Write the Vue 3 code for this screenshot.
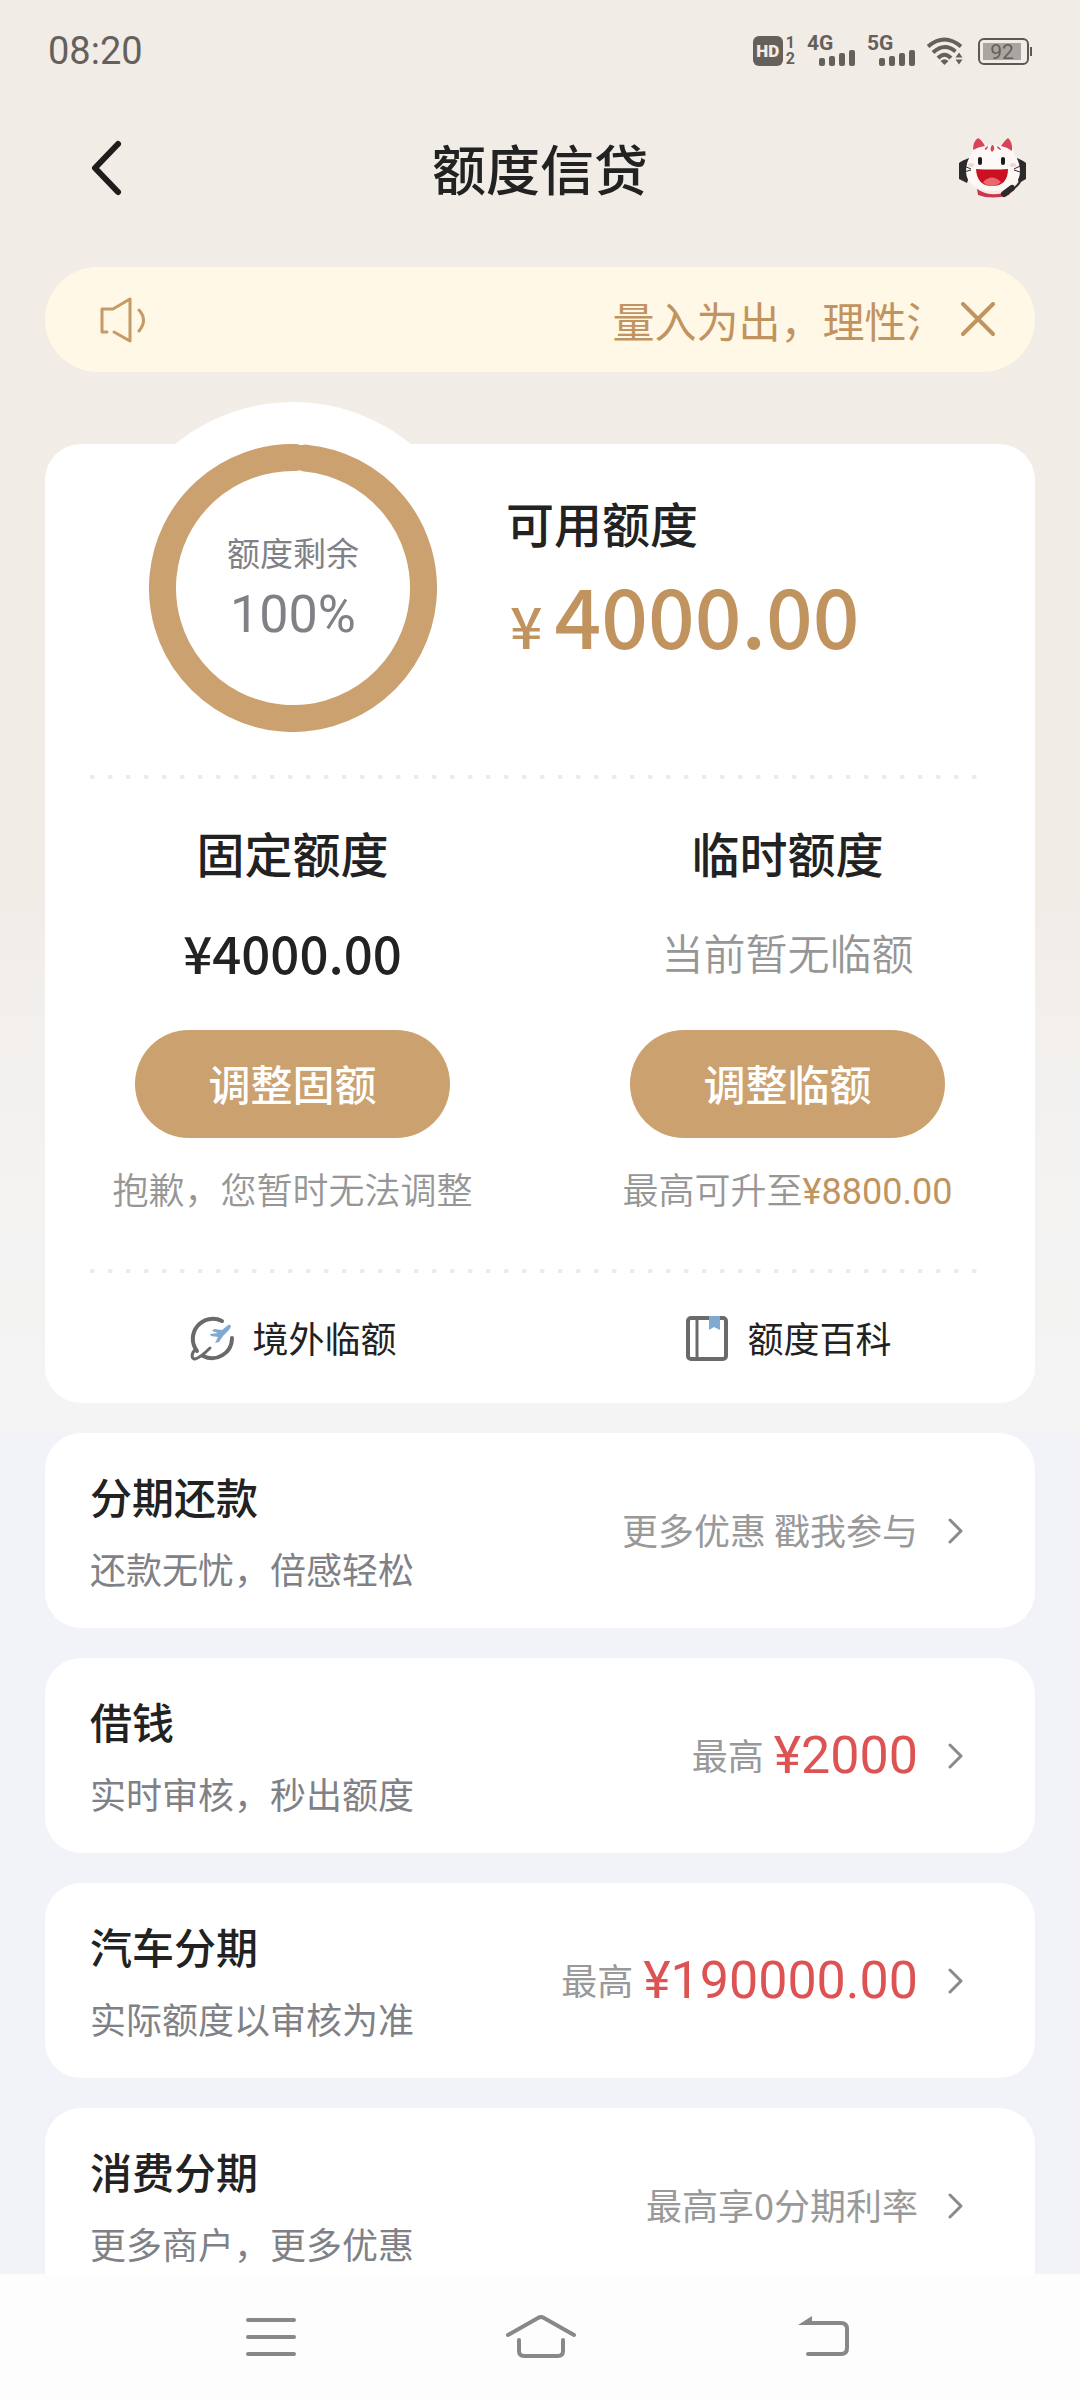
<script setup>
import { ref } from 'vue'

const noticeOpen = ref(true)

const products = [
  { name: '分期还款', desc: '还款无忧，倍感轻松', hint: '更多优惠 戳我参与' },
  { name: '借钱', desc: '实时审核，秒出额度', hint: '最高', amount: '¥2000' },
  { name: '汽车分期', desc: '实际额度以审核为准', hint: '最高', amount: '¥190000.00' },
  { name: '消费分期', desc: '更多商户，更多优惠', hint: '最高享0分期利率' }
]

const signals = ['4G', '5G']
</script>

<template>
  <div class="screen">
    <div class="status">
      <span class="clock">08:20</span>
      <div class="status-icons">
        <div class="volte">
          <span class="hd">HD</span>
          <span class="sims"><span>1</span><span>2</span></span>
        </div>
        <div v-for="s in signals" :key="s" class="signal">
          <span class="net">{{ s }}</span>
          <svg class="bars" width="36" height="16" viewBox="0 0 36 16" fill="#65605b" aria-hidden="true">
            <rect x="0" y="8" width="6" height="8" rx="2" />
            <rect x="10" y="6" width="6" height="10" rx="2" />
            <rect x="20" y="3" width="6" height="13" rx="2" />
            <rect x="30" y="0" width="6" height="16" rx="2" />
          </svg>
        </div>
        <svg class="wifi" width="36" height="28" viewBox="0 0 36 28" fill="none" stroke="#65605b" stroke-width="4" aria-hidden="true">
          <path d="M1 9.500Q17.500-4.500 34 9.500" />
          <path d="M6 15.500Q17.500 5 28.500 14.500" />
          <path d="M11 21Q17.500 14.500 24 21" />
          <path d="M13.500 24Q17.500 20.500 21.500 24L17.500 28Z" fill="#65605b" stroke="none" />
          <path d="M32 15.500L35.500 20.500H28.500ZM28.500 22.500H35.500L32 27.500Z" fill="#65605b" stroke="none" />
        </svg>
        <div class="battery"><span>92</span></div>
      </div>
    </div>

    <header class="topbar">
      <button class="icon-btn" type="button" aria-label="返回">
        <svg width="34" height="58" viewBox="0 0 34 58" fill="none" stroke="#1f1d1c" stroke-width="6" stroke-linecap="round" stroke-linejoin="round" aria-hidden="true">
          <path d="M29 5L6 29L29 53" />
        </svg>
      </button>
      <h1>额度信贷</h1>
      <button class="icon-btn" type="button" aria-label="客服">
        <svg width="70" height="62" viewBox="0 0 70 62" aria-hidden="true">
          <path d="M11 21Q3 24 1 26V42L9 46L13 34ZM59 21Q66 24 68 26V42L61 46L57 34Z" fill="#2c2a2b" />
          <path d="M19 52Q34 62 53 53L51 58Q34 63 20 58Z" fill="#c9374a" />
          <path d="M14 16Q15 3 21 2Q25 3 29 9Q35 7 42 9Q46 3 50 2Q55 5 56 17Q62 24 62 35Q61 53 35 54Q9 53 8 35Q8 24 14 16Z" fill="#fdf8f6" />
          <path d="M15 13Q15 4 20 1Q24 3 27 9Q20 10 15 13Z" fill="#d6455a" />
          <path d="M43 9Q47 3 50 1Q55 5 54 14Q49 10 43 9Z" fill="#d6455a" />
          <path d="M34 8Q31 12 34 15Q38 12 35 8ZM30 9Q26 11 27 13Q30 12 30 9ZM39 9Q43 11 43 13Q39 12 39 9Z" fill="#cf4a56" />
          <ellipse cx="13" cy="28" rx="3" ry="2" fill="#f6d4d2" />
          <ellipse cx="55" cy="28" rx="3" ry="2" fill="#f6d4d2" />
          <rect x="20" y="20" width="4" height="8" rx="2" fill="#1b1b1b" />
          <rect x="43" y="20" width="4" height="8" rx="2" fill="#1b1b1b" />
          <path d="M18 32Q34 33 50 32Q50 49 34 49Q19 49 18 32Z" fill="#cb1021" />
          <path d="M25 45Q34 36 43 45Q39 49 34 49Q28 49 25 45Z" fill="#e8686c" />
          <path d="M6 29L13 32M6 35L13 33M62 29L56 32M62 35L56 33" stroke="#2c2a2b" stroke-width="1" />
          <path d="M64 41Q60 50 51 55" fill="none" stroke="#2c2a2b" stroke-width="2" />
          <path d="M46 57L54 51" stroke="#2c2a2b" stroke-width="6" stroke-linecap="round" />
        </svg>
      </button>
    </header>

    <main class="content">
      <div v-if="noticeOpen" class="notice">
        <svg width="48" height="48" viewBox="0 0 48 48" fill="none" stroke="#c59a66" stroke-width="3" stroke-linecap="round" stroke-linejoin="round" aria-hidden="true">
          <path d="M8 36H3V13H14L31 3V45L15 36" />
          <path d="M40 14Q49 24 40 35" />
        </svg>
        <p class="marquee"><span>量入为出，理性消费</span></p>
        <button class="close" type="button" aria-label="关闭" @click="noticeOpen = false">
          <svg width="36" height="36" viewBox="0 0 36 36" fill="none" stroke="#c1935f" stroke-width="4" stroke-linecap="round" aria-hidden="true">
            <path d="M3 2L33 32M33 2L3 32" />
          </svg>
        </button>
      </div>

      <section class="card quota">
        <div class="hero">
          <div class="ring">
            <svg width="288" height="288" viewBox="0 0 288 288" fill="none" aria-hidden="true">
              <circle cx="144" cy="144" r="130.500" stroke="#cba16f" stroke-width="27" stroke-linecap="round" stroke-dasharray="809 11" transform="rotate(-84.500 144 144)" />
            </svg>
            <div class="ring-text">
              <span class="ring-label">额度剩余</span>
              <span class="ring-value">100%</span>
            </div>
          </div>
          <div class="available">
            <h2>可用额度</h2>
            <p class="available-amount"><small>¥</small>4000.00</p>
          </div>
        </div>

        <div class="dots"></div>

        <div class="columns">
          <div class="column">
            <h2>固定额度</h2>
            <p class="fixed-amount">¥4000.00</p>
            <button class="pill" type="button">调整固额</button>
            <p class="note">抱歉，您暂时无法调整</p>
          </div>
          <div class="column">
            <h2>临时额度</h2>
            <p class="temp-empty">当前暂无临额</p>
            <button class="pill" type="button">调整临额</button>
            <p class="note">最高可升至<span class="gold">¥8800.00</span></p>
          </div>
        </div>

        <div class="dots"></div>

        <nav class="links">
          <a href="#">
            <svg width="48" height="48" viewBox="0 0 48 48" fill="none" stroke="#6a6a6a" stroke-width="4" stroke-linecap="round" stroke-linejoin="round" aria-hidden="true">
              <path d="M34 6A20 20 0 0 0 9 36" />
              <path d="M44 23A20 20 0 0 1 15 41" />
              <path d="M8 34C3 38 3 44 7 44C12 43 17 38 22 33" stroke-width="3" />
              <path d="M42 10C44 11 42 14 40 16L35 21L31 27L27 28L30 22L23 21L22 19L30 18L24 16L26 14L34 15L39 11Q41 9 42 10Z" fill="#7fa9d0" stroke="none" />
            </svg>
            <span>境外临额</span>
          </a>
          <a href="#">
            <svg width="48" height="48" viewBox="0 0 48 48" fill="none" stroke="#6a6a6a" stroke-width="4" aria-hidden="true">
              <rect x="5" y="3" width="38" height="41" rx="3" />
              <path d="M14 3V44" stroke-width="3" />
              <path d="M26 1H37V15L31 12L26 15Z" fill="#7fa9d0" stroke="none" />
            </svg>
            <span>额度百科</span>
          </a>
        </nav>
      </section>

      <a v-for="p in products" :key="p.name" class="card product" href="#">
        <div class="product-text">
          <h3>{{ p.name }}</h3>
          <p>{{ p.desc }}</p>
        </div>
        <span class="hint">{{ p.hint }}</span>
        <span v-if="p.amount" class="red">{{ p.amount }}</span>
        <svg class="chevron" width="16" height="26" viewBox="0 0 16 26" fill="none" stroke="#8a8a8a" stroke-width="3" stroke-linecap="round" stroke-linejoin="round" aria-hidden="true">
          <path d="M2 2L13 13L2 24" />
        </svg>
      </a>
    </main>

    <nav class="system" aria-label="系统导航">
      <button type="button" aria-label="菜单">
        <svg width="96" height="48" viewBox="0 0 96 48" fill="none" stroke="#888" stroke-width="4" stroke-linecap="round" aria-hidden="true">
          <path d="M25 7H71M25 24H71M25 41H71" />
        </svg>
      </button>
      <button type="button" aria-label="主页">
        <svg width="96" height="48" viewBox="0 0 96 48" fill="none" stroke="#888" stroke-width="4" stroke-linecap="round" stroke-linejoin="round" aria-hidden="true">
          <path d="M16 22L46 5Q49 3 52 5L82 22" />
          <path d="M27 27V38Q27 43 32 43H66Q71 43 71 38V27" />
        </svg>
      </button>
      <button type="button" aria-label="后退">
        <svg width="96" height="48" viewBox="0 0 96 48" fill="none" stroke="#888" stroke-width="4" stroke-linecap="round" stroke-linejoin="round" aria-hidden="true">
          <path d="M46 10H80Q86 10 86 16V35Q86 41 80 41H47" />
          <path d="M37 12L51 3V12Z" fill="#888" stroke="none" />
        </svg>
      </button>
    </nav>
  </div>
</template>

<style>
body {
  margin: 0;
}
</style>

<style scoped>
.screen {
  display: flex;
  flex-direction: column;
  height: 100vh;
  overflow: hidden;
  font-family: "Noto Sans CJK SC", sans-serif;
  color: #222;
  background: linear-gradient(#f1ede6 0, #f2ece7 880px, #f3f2f1 1150px, #f4f4f4 1432px, #f2f3f8 1433px);
}

h1, h2, h3, p {
  margin: 0;
  font-weight: 500;
}

button {
  padding: 0;
  border: 0;
  background: none;
  font-family: inherit;
  cursor: pointer;
}

a {
  color: inherit;
  text-decoration: none;
}

svg {
  display: block;
  flex: none;
}

.status {
  flex: none;
  display: flex;
  align-items: center;
  justify-content: space-between;
  height: 102px;
  padding: 0 48px;
  color: #65605b;
  font-family: Roboto, sans-serif;
}

.clock {
  font-size: 38px;
}

.status-icons {
  display: flex;
  align-items: center;
  gap: 12px;
}

.volte {
  display: flex;
  align-items: center;
  gap: 3px;
}

.hd {
  width: 30px;
  height: 30px;
  border-radius: 6px;
  background: #65605b;
  color: #f1ede6;
  font-size: 17px;
  font-weight: 900;
  line-height: 30px;
  text-align: center;
}

.sims {
  display: flex;
  flex-direction: column;
  font-size: 16px;
  font-weight: 700;
  line-height: 16px;
}

.signal {
  display: flex;
  flex-direction: column;
  width: 48px;
  height: 30px;
}

.net {
  font-size: 21px;
  font-weight: 700;
  line-height: 14px;
}

.bars {
  align-self: flex-end;
}

.battery {
  position: relative;
  display: flex;
  box-sizing: border-box;
  width: 51px;
  height: 27px;
  padding: 3px;
  margin: 0 3px;
  border: 2px solid #5d5853;
  border-radius: 6px;
}

.battery span {
  width: 38px;
  background: #a9a6a2;
  font-size: 21px;
  line-height: 18px;
  text-align: center;
}

.battery::after {
  content: "";
  position: absolute;
  top: 7px;
  right: -5px;
  width: 2px;
  height: 9px;
  background: #5d5853;
}

.topbar {
  flex: none;
  display: flex;
  align-items: center;
  justify-content: space-between;
  height: 132px;
  padding: 0 52px 0 89px;
}

.topbar .icon-btn:first-child {
  width: 33px;
}

h1 {
  flex: 1;
  font-size: 54px;
  line-height: 78px;
  text-align: center;
}

.content {
  flex: 1;
  min-height: 0;
  overflow-y: auto;
  scrollbar-width: none;
  padding: 33px 45px 0;
}

.notice {
  display: flex;
  align-items: center;
  height: 105px;
  padding: 0 39px 0 54px;
  margin-bottom: 72px;
  border-radius: 53px;
  background: #fff8e7;
}

.marquee {
  flex: 1;
  overflow: hidden;
  margin: 0 39px 0 26px;
  padding-left: 49%;
  color: #c1935f;
  font-size: 42px;
  font-weight: 400;
  line-height: 60px;
  white-space: nowrap;
}

.card {
  border-radius: 36px;
  background: #fff;
}

.quota {
  padding-bottom: 40px;
}

.hero {
  display: flex;
  gap: 69px;
  padding-left: 104px;
}

.ring {
  position: relative;
  border-radius: 50%;
  background: #fff;
  box-shadow: 0 0 0 42px #fff;
}

.ring-text {
  position: absolute;
  inset: 0;
  display: flex;
  flex-direction: column;
  align-items: center;
  justify-content: center;
  gap: 3px;
  padding-top: 3px;
  color: #808187;
}

.ring-label {
  font-size: 33px;
  line-height: 48px;
}

.ring-value {
  font-family: Roboto, sans-serif;
  font-size: 52px;
  line-height: 72px;
}

.available {
  padding-top: 48px;
}

h2 {
  font-size: 48px;
  line-height: 60px;
}

.available-amount {
  margin-top: 20px;
  color: #c1935f;
  font-size: 82px;
  line-height: 84px;
}

.available-amount small {
  margin: 0 12px 0 4px;
  font-size: 57px;
}

.dots {
  height: 4px;
  margin: 43px 45px 0;
  background: radial-gradient(circle at 2px 2px, #ebebef 2px, transparent 3px) 0 0 / 18px 4px repeat-x;
}

.columns {
  display: grid;
  grid-template-columns: 1fr 1fr;
  padding: 43px 0 10px;
}

.column {
  display: flex;
  flex-direction: column;
  align-items: center;
}

.fixed-amount,
.temp-empty {
  margin-top: 40px;
  font-size: 51px;
  line-height: 60px;
}

.temp-empty {
  color: #969696;
  font-size: 42px;
  font-weight: 350;
}

.pill {
  width: 315px;
  height: 108px;
  padding-bottom: 4px;
  margin-top: 48px;
  border-radius: 54px;
  background: #cba16f;
  color: #fff;
  font-size: 42px;
  font-weight: 500;
}

.note {
  margin-top: 26px;
  color: #969696;
  font-size: 36px;
  font-weight: 350;
  line-height: 48px;
}

.gold {
  color: #c1935f;
  font-family: Roboto, sans-serif;
  font-weight: 400;
}

.links {
  display: grid;
  grid-template-columns: 1fr 1fr;
  margin-top: 42px;
}

.links a {
  display: flex;
  align-items: center;
  justify-content: center;
  gap: 16px;
  font-size: 36px;
  line-height: 44px;
}

.links span {
  padding-bottom: 4px;
}

.product {
  display: flex;
  align-items: center;
  margin-top: 30px;
  padding: 30px 71px 30px 45px;
}

.product-text {
  flex: 1;
}

h3 {
  font-size: 42px;
  line-height: 66px;
}

.product-text p {
  margin-top: 9px;
  color: #808187;
  font-size: 36px;
  font-weight: 400;
  line-height: 60px;
}

.hint {
  padding-bottom: 4px;
  color: #999;
  font-size: 36px;
  line-height: 60px;
}

.red {
  margin-left: 10px;
  color: #dd5353;
  font-family: Roboto, sans-serif;
  font-size: 52px;
  line-height: 60px;
}

.chevron {
  margin-left: 30px;
}

.system {
  flex: none;
  display: flex;
  align-items: center;
  height: 126px;
  padding: 0 136px;
  background: #fdfdfd;
}

.system button {
  flex: 1;
  display: flex;
  justify-content: center;
}
</style>
